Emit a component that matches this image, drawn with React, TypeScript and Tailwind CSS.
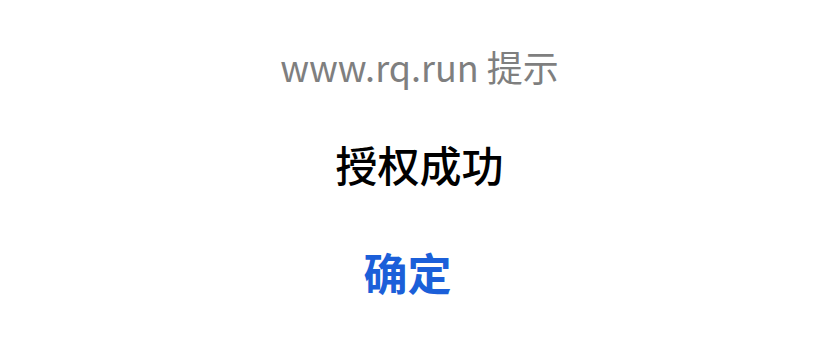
export default function App() {
  return (
    <div
      className="w-[839px] h-[351px] bg-white flex flex-col items-center overflow-hidden"
      style={{ fontFamily: '"Noto Sans CJK SC", "Noto Sans", sans-serif' }}
    >
      <div className="mt-[42px] h-[48px] flex items-center text-[36px] leading-none text-[#7f7f7f]">
        www.rq.run 提示
      </div>
      <div className="mt-[50px] h-[48px] flex items-center text-[42px] leading-none font-medium text-black">
        授权成功
      </div>
      <div className="mt-[60px] mr-[24px] h-[48px] flex items-center text-[44px] leading-none font-bold text-[#1b5fd9]">
        确定
      </div>
    </div>
  );
}
